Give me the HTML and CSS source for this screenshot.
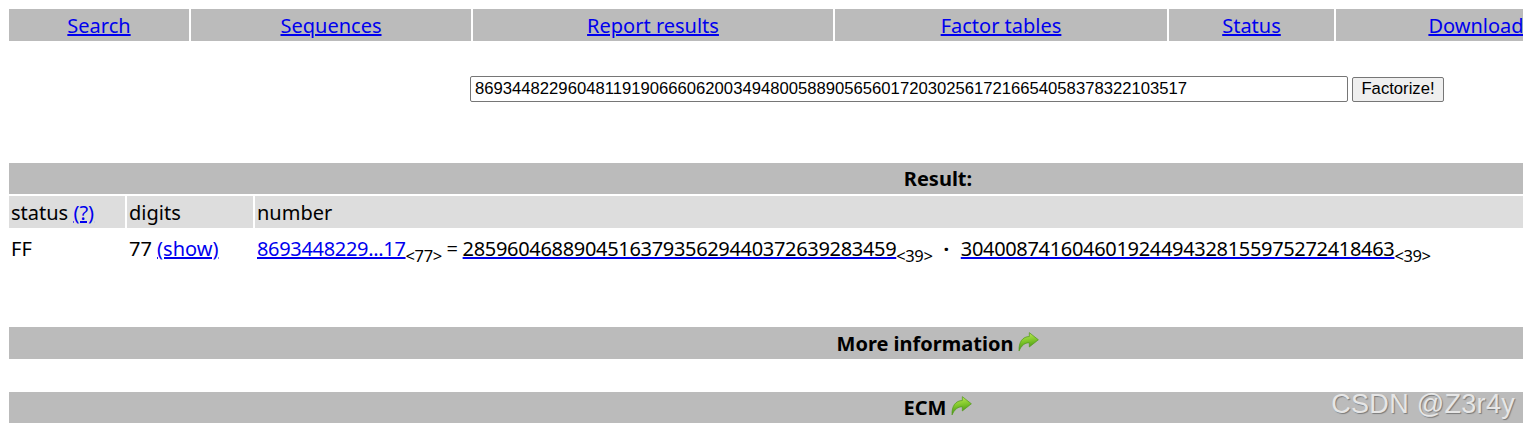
FILE: index.html
```html
<!DOCTYPE html>
<html lang="en">
<head>
<meta charset="utf-8">
<title>factordb.com</title>
<link rel="stylesheet" href="styles.css">
</head>
<body>
<div class="page">
  <nav class="nav">
    <div class="nav-cell"><a href="#">Search</a></div>
    <div class="nav-cell"><a href="#">Sequences</a></div>
    <div class="nav-cell"><a href="#">Report results</a></div>
    <div class="nav-cell"><a href="#">Factor tables</a></div>
    <div class="nav-cell"><a href="#">Status</a></div>
    <div class="nav-cell"><a href="#">Download</a></div>
  </nav>

  <form class="search">
    <input class="query" type="text" value="86934482296048119190666062003494800588905656017203025617216654058378322103517">
    <button class="go" type="button">Factorize!</button>
  </form>

  <section class="result">
    <div class="bar">Result:</div>
    <div class="grid">
      <div class="th">status <a href="#">(?)</a></div>
      <div class="th">digits</div>
      <div class="th">number</div>
      <div class="td">FF</div>
      <div class="td">77 <a href="#">(show)</a></div>
      <div class="td num"><a href="#">8693448229...17</a><sub>&lt;77&gt;</sub> = <a class="plain" href="#">285960468890451637935629440372639283459</a><sub>&lt;39&gt;</sub><span class="dot">·</span><a class="plain" href="#">304008741604601924494328155975272418463</a><sub>&lt;39&gt;</sub></div>
    </div>
  </section>

  <div class="bar more">More information <svg class="arrow" viewBox="0 0 20 19" width="21" height="20"><defs><linearGradient id="g1" x1="0" y1="0" x2="0.2" y2="1"><stop offset="0" stop-color="#c8ee5c"/><stop offset="0.5" stop-color="#82c82c"/><stop offset="1" stop-color="#3f8f10"/></linearGradient></defs><path d="M1 18 C0.5 9.5 4.5 4.3 10.8 4.3 L10.8 0.6 L19.4 7.4 L10.8 14.2 L10.8 10.2 C6.5 10.2 3.3 12.8 1 18 Z" fill="url(#g1)" stroke="#559a1e" stroke-width="0.7" stroke-linejoin="round"/></svg></div>

  <div class="bar ecm">ECM <svg class="arrow" viewBox="0 0 20 19" width="21" height="20"><defs><linearGradient id="g2" x1="0" y1="0" x2="0.2" y2="1"><stop offset="0" stop-color="#c8ee5c"/><stop offset="0.5" stop-color="#82c82c"/><stop offset="1" stop-color="#3f8f10"/></linearGradient></defs><path d="M1 18 C0.5 9.5 4.5 4.3 10.8 4.3 L10.8 0.6 L19.4 7.4 L10.8 14.2 L10.8 10.2 C6.5 10.2 3.3 12.8 1 18 Z" fill="url(#g2)" stroke="#559a1e" stroke-width="0.7" stroke-linejoin="round"/></svg></div>
</div>
<div class="watermark">CSDN @Z3r4y</div>
</body>
</html>
```

FILE: styles.css
```css
html, body {
  margin: 0;
  padding: 0;
  overflow: hidden;
  background: #fff;
}
body {
  font-family: "Noto Sans", "Open Sans", sans-serif;
  font-size: 20px;
  color: #000;
  position: relative;
  width: 1523px;
  height: 433px;
}
a { color: #0000ee; }

.page {
  width: 1858px;
  padding: 9px 0 0 9px;
}

.nav {
  display: grid;
  grid-template-columns: 180px 280px 360px 332px 165px 280px;
  column-gap: 2px;
}
.nav-cell {
  background: #bbbbbb;
  height: 32px;
  display: flex;
  align-items: center;
  justify-content: center;
  line-height: 1;
  padding-top: 2px;
  box-sizing: border-box;
}

.search {
  display: flex;
  align-items: center;
  gap: 4px;
  margin-top: 35px;
  padding-left: 461px;
}
.query {
  box-sizing: border-box;
  width: 878px;
  height: 26px;
  font-family: "Liberation Sans", Arial, sans-serif;
  font-size: 16.67px;
  border: 1px solid #767676;
  border-radius: 2px;
  padding: 0 4px;
  color: #000;
}
.go {
  box-sizing: border-box;
  width: 92px;
  height: 25px;
  font-family: "Liberation Sans", Arial, sans-serif;
  font-size: 16.67px;
  background: #efefef;
  border: 1px solid #767676;
  border-radius: 2px;
  padding: 0;
  color: #000;
}

.result { margin-top: 61px; }

.bar {
  background: #bbbbbb;
  height: 31px;
  display: flex;
  align-items: center;
  justify-content: center;
  font-weight: bold;
  gap: 5px;
}

.grid {
  display: grid;
  grid-template-columns: 116px 126px 1fr;
  gap: 2px 2px;
  margin-top: 2px;
}
.th {
  background: #dddddd;
  height: 32px;
  display: flex;
  align-items: center;
  padding-left: 2px;
  white-space: pre;
}
.td {
  height: 38px;
  box-sizing: border-box;
  padding: 5px 0 0 2px;
  line-height: 28px;
  white-space: nowrap;
}
.num { letter-spacing: -0.32px; }
.num a.plain { color: #000; text-decoration-color: #0000ee; }
.td sub {
  font-size: 16.5px;
  vertical-align: -6px;
  line-height: 1;
  letter-spacing: -0.4px;
}
.dot {
  display: inline-block;
  margin: 0 12px 0 11px;
  font-weight: bold;
}

.more { margin-top: 59px; height: 32px; }
.ecm { margin-top: 33px; height: 31px; }

.arrow { display: block; margin-top: -3px; }

.watermark {
  position: absolute;
  right: 8px;
  top: 389px;
  font-family: "Liberation Sans", Arial, sans-serif;
  font-size: 27px;
  color: #e6e6e6;
  text-shadow: 1px 1px 1px rgba(0,0,0,0.35);
  letter-spacing: 0.3px;
}
```
